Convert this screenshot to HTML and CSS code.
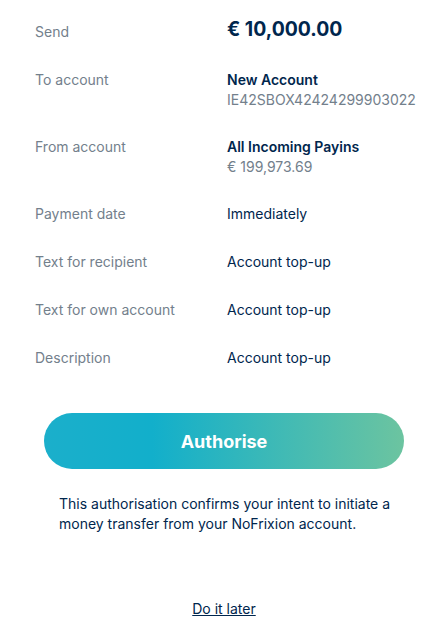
FILE: index.html
```html
<!DOCTYPE html>
<html>
<head>
<meta charset="utf-8">
<link rel="stylesheet" href="styles.css">
</head>
<body>
<div class="page">
  <div class="details">
    <div class="row send">
      <div class="label">Send</div>
      <div class="value amount">€ 10,000.00</div>
    </div>
    <div class="row">
      <div class="label">To account</div>
      <div class="value"><div class="strong">New Account</div><div class="sub">IE42SBOX42424299903022</div></div>
    </div>
    <div class="row">
      <div class="label">From account</div>
      <div class="value"><div class="strong">All Incoming Payins</div><div class="sub">€ 199,973.69</div></div>
    </div>
    <div class="row">
      <div class="label">Payment date</div>
      <div class="value">Immediately</div>
    </div>
    <div class="row">
      <div class="label">Text for recipient</div>
      <div class="value">Account top-up</div>
    </div>
    <div class="row">
      <div class="label">Text for own account</div>
      <div class="value">Account top-up</div>
    </div>
    <div class="row">
      <div class="label">Description</div>
      <div class="value">Account top-up</div>
    </div>
  </div>
  <button class="authorise">Authorise</button>
  <p class="note">This authorisation confirms your intent to initiate a money transfer from your NoFrixion account.</p>
  <a class="later" href="#">Do it later</a>
</div>
</body>
</html>
```
FILE: styles.css
```css
* { box-sizing: border-box; }
body {
  margin: 0;
  background: #fff;
  font-family: Inter, "Noto Sans", sans-serif;
  color: #00264d;
  font-size: 14px;
}
.page {
  width: 444px;
  padding-left: 4px;
  display: flex;
  flex-direction: column;
  align-items: center;
}
.details {
  width: 100%;
  padding: 22px 0 0 31px;
  display: flex;
  flex-direction: column;
  gap: 28px;
}
.row {
  display: flex;
  line-height: 20px;
}
.label {
  width: 192px;
  color: #73808c;
}
.value { color: #00264d; }
.strong { font-weight: 600; }
.sub { color: #73808c; line-height: 19px; }
.amount {
  font-size: 19.4px;
  font-weight: 700;
  margin-top: -3px;
}
.authorise {
  margin-top: 45px;
  width: 360px;
  height: 56px;
  border: none;
  border-radius: 28px;
  background: linear-gradient(90deg, #1bafcb 0%, #12afcb 30%, #6cc4a0 100%);
  color: #fff;
  font-family: Inter, "Noto Sans", sans-serif;
  font-size: 18px;
  font-weight: 700;
}
.note {
  align-self: flex-start;
  margin: 25px 0 0 55px;
  width: 340px;
  line-height: 20px;
  color: #00264d;
}
.later {
  margin-top: 65px;
  color: #00264d;
  text-decoration: underline;
  line-height: 20px;
}
```
